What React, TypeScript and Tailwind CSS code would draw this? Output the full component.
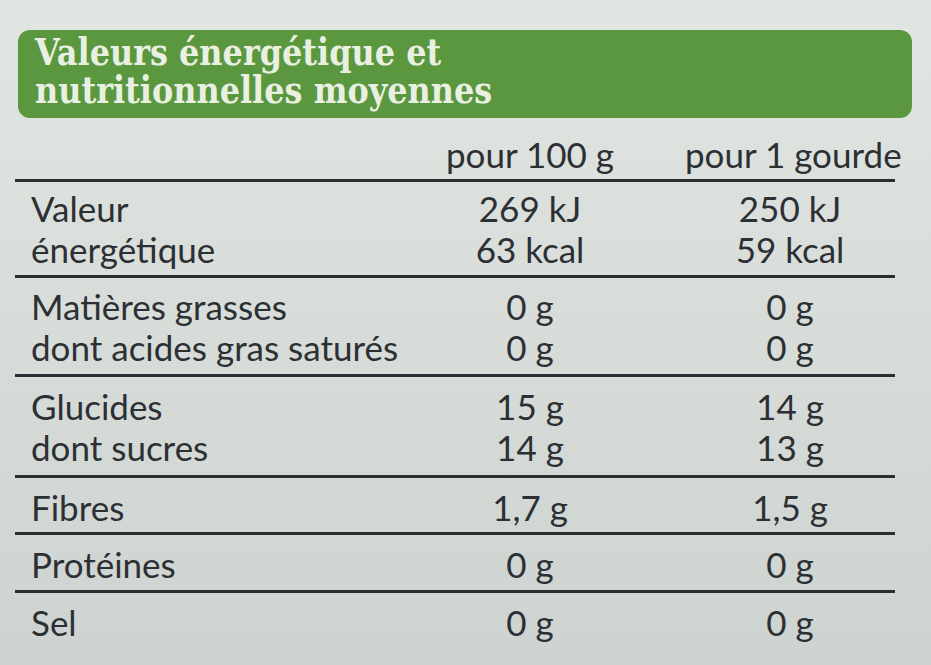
const rows: { lines: [string, string, string][]; cls: string }[] = [
  {
    lines: [
      ["Valeur", "269 kJ", "250 kJ"],
      ["énergétique", "63 kcal", "59 kcal"],
    ],
    cls: "pt-[6px] pb-[5px]",
  },
  {
    lines: [
      ["Matières grasses", "0 g", "0 g"],
      ["dont acides gras saturés", "0 g", "0 g"],
    ],
    cls: "pt-[8px] pb-[6px]",
  },
  {
    lines: [
      ["Glucides", "15 g", "14 g"],
      ["dont sucres", "14 g", "13 g"],
    ],
    cls: "pt-[9px] pb-[7px]",
  },
  { lines: [["Fibres", "1,7 g", "1,5 g"]], cls: "pt-[9px] pb-[4px]" },
  { lines: [["Protéines", "0 g", "0 g"]], cls: "pt-[9px] pb-[5px]" },
  { lines: [["Sel", "0 g", "0 g"]], cls: "pt-[9px] pb-[20px]" },
];

export default function App() {
  return (
    <div className="w-[931px] h-[665px] overflow-hidden bg-gradient-to-b from-[#e2e6e2] to-[#cdd3d0] pt-[30px] font-['Lato','Liberation_Sans',sans-serif] text-[#2c3034]">
      <div className="ml-[18px] w-[894px] h-[88px] rounded-[12px] bg-[#5a973f] pl-[17px] pt-[3px] font-['DejaVu_Serif','Liberation_Serif',serif] font-bold text-[#e9f0e2] text-[38px] leading-[38px]">
        <div className="origin-left scale-x-[0.84] whitespace-nowrap">Valeurs énergétique et</div>
        <div className="origin-left scale-x-[0.84] whitespace-nowrap">nutritionnelles moyennes</div>
      </div>

      <div className="ml-[15px] w-[880px] text-[35px] leading-[41px] whitespace-nowrap">
        <div className="grid grid-cols-[360px_310px_210px] pt-[16px] pb-[4px]">
          <div />
          <div className="text-center">pour 100 g</div>
          <div className="text-center">pour 1 gourde</div>
        </div>
        {rows.map((g, i) => (
          <div key={i} className={`border-t-[3px] border-[#2a2e32] ${g.cls}`}>
            {g.lines.map((l, j) => (
              <div key={j} className="grid grid-cols-[360px_310px_210px]">
                <div className="pl-[16px]">{l[0]}</div>
                <div className="text-center">{l[1]}</div>
                <div className="text-center">{l[2]}</div>
              </div>
            ))}
          </div>
        ))}
      </div>
    </div>
  );
}
